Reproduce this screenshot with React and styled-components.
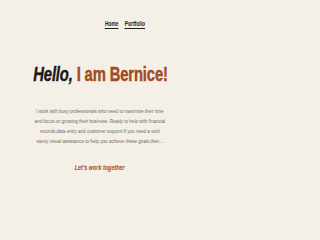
import React from "react";
import styled, { createGlobalStyle } from "styled-components";

const GlobalStyle = createGlobalStyle`
  html, body {
    margin: 0;
    padding: 0;
    background: #f4f0e7;
  }
  body {
    font-family: "Liberation Sans", Arial, sans-serif;
  }
`;

const Page = styled.div`
  width: 200px;
  height: 200px;
  display: flex;
  flex-direction: column;
  align-items: center;
  background: #f4f0e7;
  overflow: hidden;
`;

const Nav = styled.nav`
  align-self: stretch;
  display: flex;
  justify-content: flex-end;
  gap: 8px;
  padding: 20px 55px 0 0;
  transform: scaleX(0.76);
  transform-origin: 145px 0;
`;

const NavLink = styled.a`
  display: block;
  font-size: 6.5px;
  line-height: 7px;
  font-weight: 700;
  color: #1e1e1e;
  text-decoration: none;
  border-bottom: 1px solid #1e1e1e;
  padding-bottom: 1px;
`;

const Title = styled.h1`
  margin: 33px 0 0;
  font-size: 19.5px;
  line-height: 24px;
  font-weight: 700;
  letter-spacing: -0.2px;
  color: #1a1a1a;
  white-space: nowrap;
  -webkit-text-stroke: 0.4px currentColor;
  transform: scaleX(0.76);
`;

const Hello = styled.span`
  font-style: italic;
`;

const Name = styled.span`
  color: #a24b1d;
`;

const Intro = styled.p`
  margin: 20px 0 0;
  text-align: center;
  font-size: 5.5px;
  line-height: 10px;
  color: #6f6a63;
  white-space: nowrap;
  transform: scaleX(0.83);
`;

const Cta = styled.a`
  display: block;
  margin-top: 17px;
  font-size: 8px;
  line-height: 10px;
  font-weight: 700;
  font-style: italic;
  color: #a24b1d;
  text-decoration: none;
  white-space: nowrap;
  transform: scaleX(0.68);
`;

export default function App() {
  return (
    <>
      <GlobalStyle />
      <Page>
        <Nav>
          <NavLink href="#">Home</NavLink>
          <NavLink href="#">Portfolio</NavLink>
        </Nav>
        <Title>
          <Hello>Hello,</Hello> <Name>I am Bernice!</Name>
        </Title>
        <Intro>
          I work with busy professionals who need to maximize their time
          <br />
          and focus on growing their business. Ready to help with financial
          <br />
          records,data entry and customer support.If you need a tech
          <br />
          savvy visual assistance to help you achieve these goals,then...
        </Intro>
        <Cta href="#">Let's work together</Cta>
      </Page>
    </>
  );
}
